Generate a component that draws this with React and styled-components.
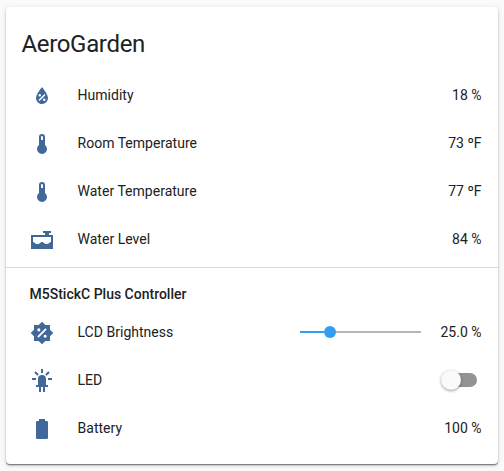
import React from "react";
import styled, { createGlobalStyle } from "styled-components";

const Global = createGlobalStyle`
  * { box-sizing: border-box; }
  body { margin: 0; background: #fafafa; font-family: Roboto, sans-serif; color: #212121; }
`;

const Page = styled.main`
  height: 471px;
  padding: 7px 6px;
  overflow: hidden;
`;

const Card = styled.section`
  height: 457px;
  background: #fff;
  border-radius: 4px;
  box-shadow: 0 2px 2px 0 rgba(0, 0, 0, 0.14), 0 1px 5px 0 rgba(0, 0, 0, 0.12),
    0 1px 1px 0 rgba(0, 0, 0, 0.4);
`;

const Title = styled.h1`
  margin: 0;
  height: 65px;
  padding: 13px 15.5px 0;
  font-size: 24px;
  font-weight: 400;
  letter-spacing: -0.014em;
  line-height: 48px;
`;

const Row = styled.div`
  display: flex;
  align-items: center;
  height: 48px;
  padding: 0 16.5px 0 24px;
  font-size: 14px;
  line-height: 20px;
`;

const Icon = styled.svg`
  width: 24px;
  height: 24px;
  flex: none;
  fill: #426799;
`;

const Name = styled.span`
  flex: 1;
  margin: 0 0 2px 23.5px;
  letter-spacing: 0.02px;
`;

const Value = styled.span`
  margin-bottom: 2px;
  text-align: right;
`;

const Divider = styled.hr`
  height: 1px;
  margin: 3px 0 0;
  border: 0;
  background: #dcdcdc;
`;

const SectionLabel = styled.h2`
  height: 41px;
  margin: 0;
  padding: 16px 0 0 23.5px;
  font-size: 14px;
  font-weight: 500;
  line-height: 20px;
`;

const Slider = styled.div`
  display: flex;
  align-items: center;
  width: 121px;
  margin: 0 19.5px 2px 0;
`;

const Track = styled.span`
  height: 2px;
  width: ${(p) => (p.$active ? "24px" : "auto")};
  flex: ${(p) => (p.$active ? "none" : 1)};
  background: ${(p) => (p.$active ? "#339df3" : "#b5b5b5")};
`;

const Knob = styled.span`
  width: 12px;
  height: 12px;
  border-radius: 50%;
  background: #339df3;
`;

const Switch = styled.div`
  display: flex;
  align-items: center;
  width: 34px;
  height: 14px;
  margin: 0 4.5px 2px 0;
  border-radius: 7px;
  background: #939393;
`;

const Thumb = styled.span`
  width: 20px;
  height: 20px;
  margin-left: -2px;
  flex: none;
  border-radius: 50%;
  background: #fafafa;
  box-shadow: 0 1px 3px rgba(0, 0, 0, 0.4);
`;

const icons = {
  humidity:
    "M12,3.25C12,3.25 6,10 6,14C6,17.32 8.69,20 12,20A6,6 0 0,0 18,14C18,10 12,3.25 12,3.25M14.47,9.97L15.53,11.03L9.53,17.03L8.47,15.97M9.75,10A1.25,1.25 0 0,1 11,11.25A1.25,1.25 0 0,1 9.75,12.5A1.25,1.25 0 0,1 8.5,11.25A1.25,1.25 0 0,1 9.75,10M14.25,14.5A1.25,1.25 0 0,1 15.5,15.75A1.25,1.25 0 0,1 14.25,17A1.25,1.25 0 0,1 13,15.75A1.25,1.25 0 0,1 14.25,14.5Z",
  thermometer:
    "M15 13V5A3 3 0 0 0 9 5V13A5 5 0 1 0 15 13M12 4A1 1 0 0 1 13 5V8H11V5A1 1 0 0 1 12 4Z",
  tank: "M13 3V5H15V7H1V21H23V7H19V5H21V3ZM3 9H21V14C19.5 14 19.3 16 16.5 16C13.8 16 13.6 14 12 14C10.4 14 10.2 16 7.5 16C4.7 16 4.5 14 3 14Z",
  brightness:
    "M12 .69L8.69 4H4V8.69L.69 12L4 15.31V20H8.69L12 23.31L15.31 20H20V15.31L23.31 12L20 8.69V4H15.31ZM15.4 7.3L16.7 8.6L8.5 16.8L7.2 15.5ZM8.85 7.3A1.55 1.55 0 1 1 8.84 7.3ZM15.15 13.7A1.55 1.55 0 1 1 15.14 13.7Z",
  led: "M11,0V4H13V0H11M18.3,2.29L15.24,5.29L16.64,6.71L19.7,3.71L18.3,2.29M5.71,2.29L4.29,3.71L7.29,6.71L8.71,5.29L5.71,2.29M12,6A4,4 0 0,0 8,10V16H6V18H9V23H11V18H13V23H15V18H18V16H16V10A4,4 0 0,0 12,6M2,9V11H6V9H2M18,9V11H22V9H18Z",
  battery:
    "M16.67,4H15V2H9V4H7.33A1.33,1.33 0 0,0 6,5.33V20.67C6,21.4 6.6,22 7.33,22H16.67A1.33,1.33 0 0,0 18,20.67V5.33C18,4.6 17.4,4 16.67,4Z",
};

function Entity({ icon, name, value, children }) {
  return (
    <Row>
      <Icon viewBox="0 0 24 24" fillRule="evenodd" aria-hidden="true">
        <path d={icons[icon]} />
      </Icon>
      <Name>{name}</Name>
      {children}
      {value && <Value>{value}</Value>}
    </Row>
  );
}

export default function App() {
  return (
    <Page>
      <Global />
      <Card>
        <Title>AeroGarden</Title>
        <Entity icon="humidity" name="Humidity" value="18 %" />
        <Entity icon="thermometer" name="Room Temperature" value="73 ºF" />
        <Entity icon="thermometer" name="Water Temperature" value="77 ºF" />
        <Entity icon="tank" name="Water Level" value="84 %" />
        <Divider />
        <SectionLabel>M5StickC Plus Controller</SectionLabel>
        <Entity icon="brightness" name="LCD Brightness" value="25.0 %">
          <Slider>
            <Track $active />
            <Knob />
            <Track />
          </Slider>
        </Entity>
        <Entity icon="led" name="LED">
          <Switch role="switch" aria-checked="false">
            <Thumb />
          </Switch>
        </Entity>
        <Entity icon="battery" name="Battery" value="100 %" />
      </Card>
    </Page>
  );
}
